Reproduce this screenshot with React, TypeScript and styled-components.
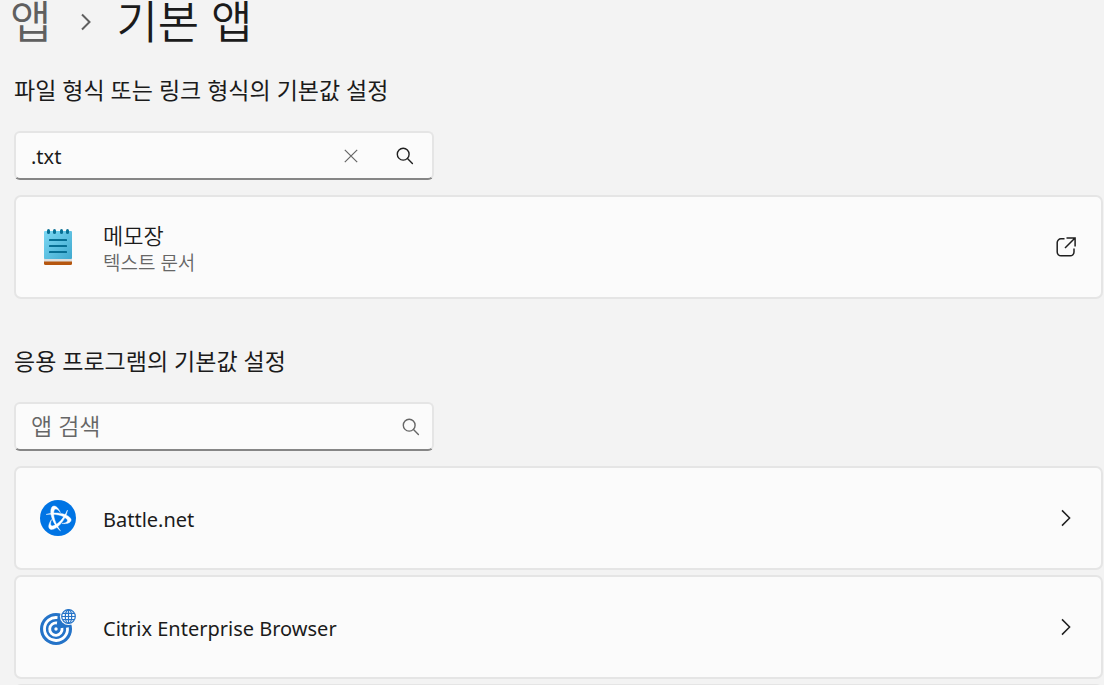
import React from "react";
import styled, { createGlobalStyle } from "styled-components";

const GlobalStyle = createGlobalStyle`
  *, *::before, *::after { box-sizing: border-box; }
  body {
    margin: 0;
    background: #f3f3f3;
    color: #1b1b1b;
    font-family: "Noto Sans", "Noto Sans CJK KR", sans-serif;
    font-size: 20px;
  }
  h1, h2, ul { margin: 0; padding: 0; }
  button, input { font: inherit; color: inherit; }
`;

const Page = styled.main`
  height: 100vh;
  overflow: hidden;
  padding: 0 1px 0 14px;
`;

const Breadcrumb = styled.nav`
  display: flex;
  align-items: center;
  height: 44px;
  margin-left: -4px;
  font-size: 45px;
  line-height: 44px;
`;

const CrumbLink = styled.a`
  color: #5f5f5f;
  text-decoration: none;
  font-weight: 350;
`;

const CrumbIcon = styled.svg`
  width: 12px;
  height: 18px;
  margin: 0 24px 0 29px;
`;

const PageTitle = styled.h1`
  font-size: 45px;
  font-weight: 350;
  line-height: 44px;
`;

const Section = styled.section`
  padding-top: 28px;

  & + & {
    padding-top: 44px;
  }
`;

const SectionTitle = styled.h2`
  font-size: 23px;
  font-weight: 400;
  line-height: 36px;
  margin-bottom: 23px;
`;

const SearchBox = styled.div`
  display: flex;
  align-items: center;
  width: 100%;
  max-width: 420px;
  height: 49px;
  margin-bottom: 15px;
  padding-left: 15px;
  background: #fbfbfb;
  border: 2px solid #e5e5e5;
  border-bottom-color: #868686;
  border-radius: 6px;
`;

const SearchInput = styled.input`
  flex: 1;
  min-width: 0;
  height: 100%;
  padding: 2px 0 0;
  border: 0;
  outline: 0;
  background: transparent;

  &::placeholder {
    color: #666;
    font-size: 23px;
    font-weight: 350;
    opacity: 1;
  }
`;

const IconButton = styled.button<{ $wide?: boolean; $muted?: boolean }>`
  display: grid;
  place-items: center;
  width: ${(p) => (p.$wide ? 54 : 42)}px;
  height: 100%;
  padding: 0;
  border: 0;
  background: none;
  color: ${(p) => (p.$muted ? "#666" : "#1f1f1f")};

  svg {
    display: block;
  }
`;

const CardList = styled.ul`
  display: grid;
  gap: 5px;
  list-style: none;
`;

const Card = styled.button`
  display: flex;
  align-items: center;
  width: 100%;
  height: 104px;
  padding: 0 23px 0 24px;
  background: #fbfbfb;
  border: 2px solid #e5e5e5;
  border-radius: 7px;
  text-align: left;
`;

const AppIcon = styled.svg`
  width: 36px;
  height: 36px;
  flex: none;
  margin-right: 27px;
`;

const CardText = styled.span`
  display: flex;
  flex: 1;
  flex-direction: column;
  padding-top: 3px;
`;

const CardName = styled.span<{ $large?: boolean }>`
  font-size: ${(p) => (p.$large ? 22 : 20)}px;
  font-weight: ${(p) => (p.$large ? 350 : 400)};
  line-height: 28px;
`;

const CardDetail = styled.span`
  color: #666;
  font-size: 19px;
  font-weight: 350;
  line-height: 28px;
`;

const Trailing = styled.span`
  display: grid;
  place-items: center;
  width: 24px;
`;

const SearchIcon = () => (
  <svg width="18" height="18" viewBox="0 0 18 18" fill="none" stroke="currentColor" strokeWidth="1.4" aria-hidden="true">
    <circle cx="7.2" cy="7.2" r="5.9" />
    <path d="M11.5 11.5 16.4 16.4" strokeLinecap="round" />
  </svg>
);

const ClearIcon = () => (
  <svg width="14" height="14" viewBox="0 0 14 14" fill="none" stroke="currentColor" strokeWidth="1.2" aria-hidden="true">
    <path d="M.8.8 13.2 13.2M13.2.8.8 13.2" />
  </svg>
);

const OpenIcon = () => (
  <svg width="20" height="20" viewBox="0 0 20 20" fill="none" stroke="#1f1f1f" strokeWidth="1.5" aria-hidden="true">
    <path d="M8.5 1.8H5A3.8 3.8 0 0 0 1.2 5.6V15A3.8 3.8 0 0 0 5 18.8h9.2A3.8 3.8 0 0 0 18 15v-3.5" />
    <path d="M10.5.9h8.6v8.6M19 1 9 11" />
  </svg>
);

const ChevronIcon = () => (
  <svg width="10" height="18" viewBox="0 0 10 18" fill="none" stroke="#1f1f1f" strokeWidth="1.5" aria-hidden="true">
    <path d="M1 1.4 8.6 9 1 16.6" />
  </svg>
);

const NotepadLogo = () => (
  <AppIcon viewBox="0 0 36 36" aria-hidden="true">
    <defs>
      <linearGradient id="notepad-paper" x1="0" y1="0" x2="1" y2="1">
        <stop offset="0" stopColor="#7cd8f4" />
        <stop offset="1" stopColor="#3fa9cf" />
      </linearGradient>
    </defs>
    <path d="M4 30h28v4.500q0 1.500-1.500 1.500h-25Q4 36 4 34.500z" fill="#b5560f" />
    <path d="M4 29h28v3.500H4z" fill="#dedede" />
    <path d="M5 2h26q1 0 1 1v26q0 1-1 1H5q-1 0-1-1V3q0-1 1-1z" fill="url(#notepad-paper)" />
    <g fill="#076f94">
      <rect x="7" y="0" width="3" height="5" rx="1.5" />
      <rect x="13" y="0" width="3" height="5" rx="1.5" />
      <rect x="20" y="0" width="3" height="5" rx="1.5" />
      <rect x="26" y="0" width="3" height="5" rx="1.5" />
      <rect x="9" y="10" width="18" height="2" rx=".5" />
      <rect x="9" y="16" width="18" height="2" rx=".5" />
      <rect x="9" y="22" width="18" height="2" rx=".5" />
    </g>
  </AppIcon>
);

const swirl = "M6 14.500C14 11.300 28 13 31 19c1 3.800-4 5.200-9 4.500 3.500-.3 6.300-1.800 5.300-3.800C24 15 14 13.600 6 14.500z";

const BattleNetLogo = () => (
  <AppIcon viewBox="0 0 36 36" aria-hidden="true">
    <circle cx="18" cy="18" r="18" fill="#0074e4" />
    <g fill="#fff" stroke="#fff" strokeWidth=".4">
      <path d={swirl} />
      <path d={swirl} transform="rotate(120 18 18.500)" />
      <path d={swirl} transform="rotate(240 18 18.500)" />
    </g>
  </AppIcon>
);

const CitrixLogo = () => (
  <AppIcon viewBox="0 0 36 36" aria-hidden="true">
    <circle cx="16" cy="20" r="16" fill="#2473c8" />
    <g fill="none" stroke="#fff" strokeWidth="2.800">
      <path d="M17.500 8.600A11.500 11.500 0 1 0 27.400 18.500" />
      <path d="M17 14A6.200 6.200 0 1 0 22 19" />
    </g>
    <circle cx="16" cy="20" r="1.700" fill="#fff" />
    <circle cx="28.500" cy="7.500" r="8.600" fill="#fbfbfb" />
    <g fill="none" stroke="#2473c8" strokeWidth="1.200">
      <circle cx="28.500" cy="7.500" r="6.800" />
      <ellipse cx="28.500" cy="7.500" rx="3.200" ry="6.600" />
      <path d="M28.500 1v13M22 7.500h13M23 4.300h11M23 10.700h11" />
    </g>
  </AppIcon>
);

interface AppEntry {
  name: string;
  Logo: () => React.JSX.Element;
}

const apps: AppEntry[] = [
  { name: "Battle.net", Logo: BattleNetLogo },
  { name: "Citrix Enterprise Browser", Logo: CitrixLogo },
];

export default function App() {
  return (
    <>
      <GlobalStyle />
      <Page>
        <Breadcrumb>
          <CrumbLink href="#apps">앱</CrumbLink>
          <CrumbIcon viewBox="0 0 12 18" fill="none" stroke="#5f5f5f" strokeWidth="2" aria-hidden="true">
            <path d="M2 1.500 9.500 9 2 16.500" />
          </CrumbIcon>
          <PageTitle>기본 앱</PageTitle>
        </Breadcrumb>

        <Section>
          <SectionTitle id="by-type">파일 형식 또는 링크 형식의 기본값 설정</SectionTitle>
          <SearchBox>
            <SearchInput type="text" defaultValue=".txt" aria-labelledby="by-type" />
            <IconButton type="button" $wide $muted aria-label="지우기"><ClearIcon /></IconButton>
            <IconButton type="button" $wide aria-label="검색"><SearchIcon /></IconButton>
          </SearchBox>
          <Card type="button">
            <NotepadLogo />
            <CardText>
              <CardName $large>메모장</CardName>
              <CardDetail>텍스트 문서</CardDetail>
            </CardText>
            <Trailing><OpenIcon /></Trailing>
          </Card>
        </Section>

        <Section>
          <SectionTitle id="by-app">응용 프로그램의 기본값 설정</SectionTitle>
          <SearchBox>
            <SearchInput type="text" placeholder="앱 검색" aria-labelledby="by-app" />
            <IconButton type="button" $muted aria-label="앱 검색"><SearchIcon /></IconButton>
          </SearchBox>
          <CardList>
            {apps.map(({ name, Logo }) => (
              <li key={name}>
                <Card type="button">
                  <Logo />
                  <CardText>
                    <CardName>{name}</CardName>
                  </CardText>
                  <Trailing><ChevronIcon /></Trailing>
                </Card>
              </li>
            ))}
            <Card as="li" />
          </CardList>
        </Section>
      </Page>
    </>
  );
}
